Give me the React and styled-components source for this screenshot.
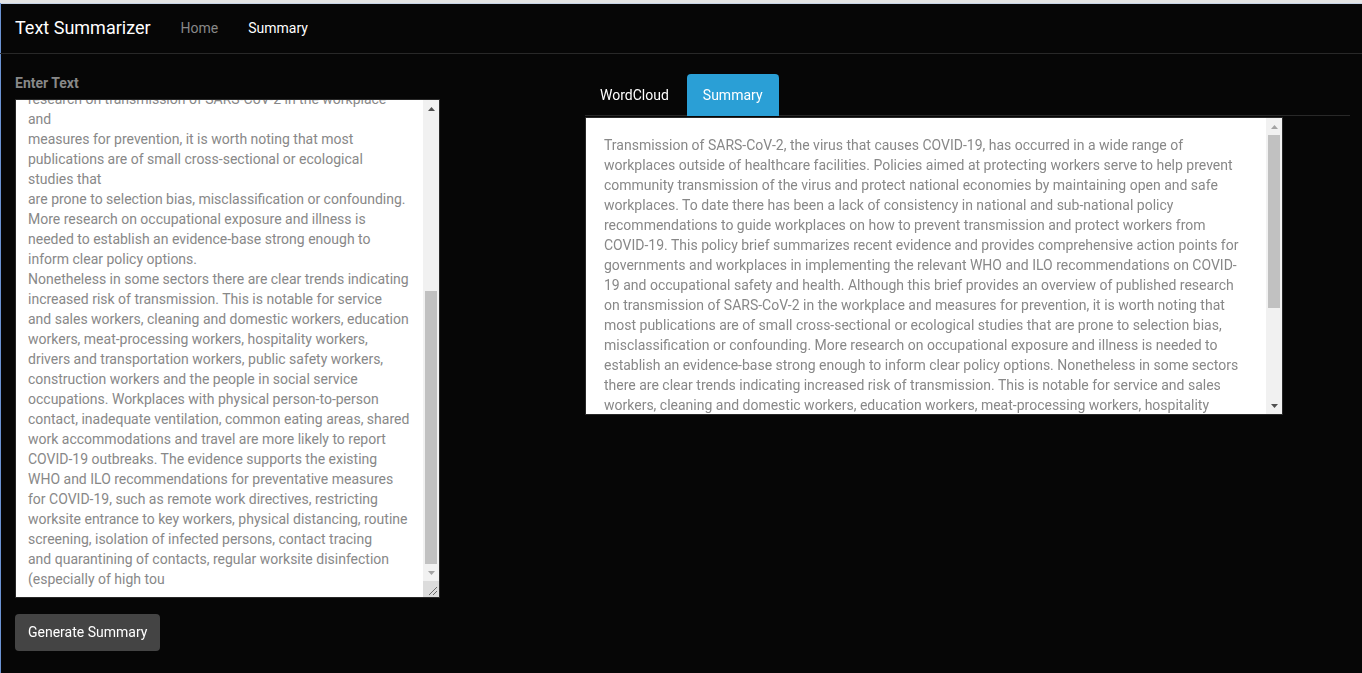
import React, { useEffect, useLayoutEffect, useRef, useState } from 'react';
import styled, { createGlobalStyle } from 'styled-components';

const inputText = [
	'Transmission of SARS-CoV-2, the virus that causes COVID-19,',
	'has occurred in a wide range of workplaces outside of',
	'healthcare facilities. Policies aimed at protecting workers',
	'serve to help prevent community transmission of the virus',
	'and protect national economies by maintaining open and',
	'safe workplaces.',
	'To date there has been a lack of consistency in national',
	'and sub-national policy recommendations to guide',
	'workplaces on how to prevent transmission and protect',
	'workers from COVID-19.',
	'This policy brief summarizes recent evidence and provides',
	'comprehensive action points for governments and',
	'workplaces in implementing the relevant WHO and ILO',
	'recommendations on COVID-19 and occupational health.',
	'Although this brief provides an overview of published',
	'research on transmission of SARS-CoV-2 in the workplace',
	'and',
	'measures for prevention, it is worth noting that most',
	'publications are of small cross-sectional or ecological',
	'studies that',
	'are prone to selection bias, misclassification or confounding.',
	'More research on occupational exposure and illness is',
	'needed to establish an evidence-base strong enough to',
	'inform clear policy options.',
	'Nonetheless in some sectors there are clear trends indicating',
	'increased risk of transmission. This is notable for service',
	'and sales workers, cleaning and domestic workers, education',
	'workers, meat-processing workers, hospitality workers,',
	'drivers and transportation workers, public safety workers,',
	'construction workers and the people in social service',
	'occupations. Workplaces with physical person-to-person',
	'contact, inadequate ventilation, common eating areas, shared',
	'work accommodations and travel are more likely to report',
	'COVID-19 outbreaks. The evidence supports the existing',
	'WHO and ILO recommendations for preventative measures',
	'for COVID-19, such as remote work directives, restricting',
	'worksite entrance to key workers, physical distancing, routine',
	'screening, isolation of infected persons, contact tracing',
	'and quarantining of contacts, regular worksite disinfection',
	'(especially of high tou',
].join('\n');

const summaryText = [
	'Transmission of SARS-CoV-2, the virus that causes COVID-19, has occurred in a wide range of',
	'workplaces outside of healthcare facilities. Policies aimed at protecting workers serve to help prevent',
	'community transmission of the virus and protect national economies by maintaining open and safe',
	'workplaces. To date there has been a lack of consistency in national and sub-national policy',
	'recommendations to guide workplaces on how to prevent transmission and protect workers from',
	'COVID-19. This policy brief summarizes recent evidence and provides comprehensive action points for',
	'governments and workplaces in implementing the relevant WHO and ILO recommendations on COVID-',
	'19 and occupational safety and health. Although this brief provides an overview of published research',
	'on transmission of SARS-CoV-2 in the workplace and measures for prevention, it is worth noting that',
	'most publications are of small cross-sectional or ecological studies that are prone to selection bias,',
	'misclassification or confounding. More research on occupational exposure and illness is needed to',
	'establish an evidence-base strong enough to inform clear policy options. Nonetheless in some sectors',
	'there are clear trends indicating increased risk of transmission. This is notable for service and sales',
	'workers, cleaning and domestic workers, education workers, meat-processing workers, hospitality',
	'workers, drivers and transportation workers, public safety workers, construction workers and the',
	'people in social service occupations. Workplaces with physical person-to-person contact, inadequate',
	'ventilation, common eating areas, shared work accommodations and travel are more likely to report',
	'COVID-19 outbreaks. The evidence supports the existing WHO and ILO recommendations for',
	'preventative measures for COVID-19, such as remote work directives, restricting worksite entrance to',
	'key workers, physical distancing, routine screening, isolation of infected persons, contact tracing',
	'and quarantining of contacts, regular worksite disinfection.',
].join('\n');

// the page is shot with native scrollbars hidden, so draw a classic one beside the scroller
function VScrollbar({ target, corner }){
	const trackRef = useRef(null);
	const [m, setM] = useState({ top: 0, size: 0, atTop: true, atEnd: false });

	useLayoutEffect(() => {
		const el = target.current;
		const update = () => {
			const track = trackRef.current.clientHeight;
			const range = el.scrollHeight - el.clientHeight;
			const size = Math.max(Math.round(track * el.clientHeight / el.scrollHeight), 20);
			const top = range > 0 ? Math.round((track - size) * el.scrollTop / range) : 0;
			setM({ top, size, atTop: el.scrollTop <= 0, atEnd: el.scrollTop >= range - 1 });
		};
		update();
		el.addEventListener('scroll', update);
		return () => el.removeEventListener('scroll', update);
	}, [target]);

	return(
		<Bar>
			<ArrowButton>
				<svg width="7" height="4" viewBox="0 0 7 4"><polygon points="0,4 3.5,0 7,4" fill={m.atTop ? '#a3a3a3' : '#505050'}/></svg>
			</ArrowButton>
			<Track ref={trackRef}>
				<Thumb style={{ marginTop: m.top, height: m.size }}/>
			</Track>
			<ArrowButton>
				<svg width="7" height="4" viewBox="0 0 7 4"><polygon points="0,0 7,0 3.5,4" fill={m.atEnd ? '#a3a3a3' : '#505050'}/></svg>
			</ArrowButton>
			{corner && (
				<Corner>
					<svg width="10" height="10" viewBox="0 0 10 10">
						<line x1="2" y1="10" x2="10" y2="2" stroke="#6b6b6b" strokeWidth="1"/>
						<line x1="6" y1="10" x2="10" y2="6" stroke="#6b6b6b" strokeWidth="1"/>
					</svg>
				</Corner>
			)}
		</Bar>
	);
}

export default function App(){
	const inputRef = useRef(null);
	const summaryRef = useRef(null);
	const [tab, setTab] = useState('summary');

	useEffect(() => {
		if (inputRef.current) inputRef.current.scrollTop = inputRef.current.scrollHeight;
	}, []);

	return(
		<>
			<GlobalStyle/>
			<Navbar>
				<Brand>Text Summarizer</Brand>
				<NavLink>Home</NavLink>
				<NavLink active>Summary</NavLink>
			</Navbar>
			<Main>
				<LeftColumn>
					<Label>Enter Text</Label>
					<InputFrame>
						<InputArea ref={inputRef} defaultValue={inputText} spellCheck={false}/>
						<VScrollbar target={inputRef} corner/>
					</InputFrame>
					<Button>Generate Summary</Button>
				</LeftColumn>
				<RightColumn>
					<Tabs>
						<Tab active={tab === 'wordcloud'} onClick={() => setTab('wordcloud')}>WordCloud</Tab>
						<Tab active={tab === 'summary'} onClick={() => setTab('summary')}>Summary</Tab>
					</Tabs>
					<SummaryFrame>
						<SummaryText ref={summaryRef}>{summaryText}</SummaryText>
						<VScrollbar target={summaryRef}/>
					</SummaryFrame>
				</RightColumn>
			</Main>
		</>
	);
}

const GlobalStyle = createGlobalStyle`
	html {
		background-color: #060606;
	}
	body {
		margin: 0;
		min-height: 100vh;
		box-sizing: border-box;
		background-color: #060606;
		border-top: 3px solid #e4e4e4;
		box-shadow: inset 1px 0 0 #6b93d3, inset 0 1px 0 #c6d3e6;
		font-family: Roboto, 'Helvetica Neue', Arial, sans-serif;
		font-size: 14px;
		line-height: 20px;
		color: #888;
	}
`;

const Navbar = styled.div`
	height: 50px;
	display: flex;
	align-items: center;
	border-bottom: 1px solid #282828;
`;
const Brand = styled.div`
	font-size: 18px;
	color: #fff;
	padding: 0 15px;
`;
const NavLink = styled.div`
	font-size: 14px;
	padding: 0 15px;
	color: ${p => p.active ? '#fff' : '#888'};
`;

const Main = styled.div`
	display: grid;
	grid-template-columns: 570px 1fr;
	margin-top: 19px;
`;
const LeftColumn = styled.div`
	display: flex;
	flex-direction: column;
	align-items: flex-start;
	padding: 0 15px;
`;
const Label = styled.div`
	font-weight: 700;
	color: #888;
	margin-bottom: 6px;
`;

const Bar = styled.div`
	width: 16px;
	flex: none;
	display: flex;
	flex-direction: column;
	background-color: #f1f1f1;
`;
const ArrowButton = styled.div`
	height: 17px;
	flex: none;
	display: flex;
	align-items: center;
	justify-content: center;
`;
const Track = styled.div`
	flex: 1;
	min-height: 0;
	display: flex;
	flex-direction: column;
	align-items: center;
`;
const Thumb = styled.div`
	width: 12px;
	flex: none;
	background-color: #c1c1c1;
`;
const Corner = styled.div`
	height: 16px;
	flex: none;
	display: flex;
	align-items: flex-end;
	justify-content: flex-end;
	padding: 0 2px 2px 0;
	box-sizing: border-box;
	background-color: #dcdcdc;
`;

const InputFrame = styled.div`
	width: 425px;
	height: 499px;
	box-sizing: border-box;
	display: flex;
	border: 1px solid #282828;
	background-color: #fff;
`;
const InputArea = styled.textarea`
	flex: 1;
	min-width: 0;
	box-sizing: border-box;
	padding: 6px 4px 8px 12px;
	border: none;
	border-radius: 0;
	resize: none;
	background-color: #fff;
	color: #888;
	font-family: Roboto, 'Helvetica Neue', Arial, sans-serif;
	font-size: 14px;
	line-height: 20px;
	overflow-y: scroll;
	scrollbar-width: none;
	white-space: pre-wrap;
	outline: none;
`;
const Button = styled.button`
	margin-top: 16px;
	padding: 8px 13px;
	border: none;
	border-radius: 4px;
	background-color: #444;
	color: #fff;
	font-family: Roboto, 'Helvetica Neue', Arial, sans-serif;
	font-size: 14px;
	line-height: 21px;
	cursor: pointer;
`;

const RightColumn = styled.div`
	padding: 1px 12px 0 15px;
`;
const Tabs = styled.div`
	display: flex;
	gap: 2px;
	border-bottom: 1px solid #282828;
`;
const Tab = styled.div`
	padding: 10px 15px;
	line-height: 20px;
	margin-bottom: -1px;
	border: 1px solid transparent;
	border-radius: 4px 4px 0 0;
	color: #fff;
	background-color: ${p => p.active ? '#2a9fd6' : 'transparent'};
	cursor: pointer;
	&:first-child {
		margin-left: -1px;
	}
`;
const SummaryFrame = styled.div`
	margin-top: 1px;
	width: 698px;
	height: 298px;
	box-sizing: border-box;
	display: flex;
	border: 1px solid #282828;
	background-color: #fff;
`;
const SummaryText = styled.div`
	flex: 1;
	min-width: 0;
	padding: 17px 8px 10px 18px;
	color: #888;
	white-space: pre;
	overflow-y: scroll;
	overflow-x: hidden;
	scrollbar-width: none;
`;
